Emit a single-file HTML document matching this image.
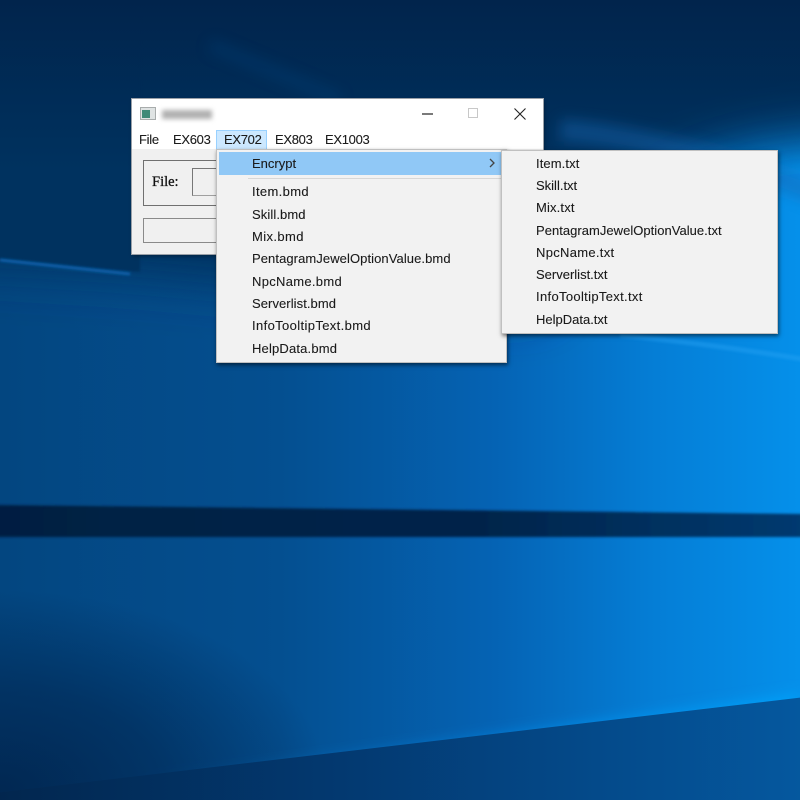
<!DOCTYPE html>
<html><head><meta charset="utf-8"><style>
html,body{margin:0;padding:0;width:800px;height:800px;overflow:hidden;background:#04305f}
#w{position:relative;width:800px;height:800px;overflow:hidden}
#bg{position:absolute;left:0;top:0;display:block}
.a{position:absolute;box-sizing:border-box}
.t{position:absolute;font:13px/18px "Liberation Sans",sans-serif;color:#1a1a1a;white-space:nowrap;-webkit-text-stroke:.1px #1a1a1a}
.m{letter-spacing:-.3px}
</style></head><body><div id="w">
<svg id="bg" width="800" height="800" viewBox="0 0 800 800">
<defs>
<linearGradient id="g0" x1="0" y1="0" x2="1" y2="0"><stop offset="0" stop-color="#034680"/><stop offset=".35" stop-color="#044f90"/><stop offset=".62" stop-color="#0563b4"/><stop offset=".82" stop-color="#057ed6"/><stop offset="1" stop-color="#0590ea"/></linearGradient>
<linearGradient id="top" x1="0" y1="0" x2="0" y2="1"><stop offset="0" stop-color="#01244c"/><stop offset="1" stop-color="#01244c" stop-opacity="0"/></linearGradient>
<linearGradient id="band" x1="0" y1="0" x2="1" y2="0"><stop offset="0" stop-color="#011f42"/><stop offset=".6" stop-color="#02244a"/><stop offset="1" stop-color="#043a70"/></linearGradient>
<linearGradient id="wedge" x1="0" y1="0" x2="1" y2="0"><stop offset="0" stop-color="#02264e"/><stop offset=".45" stop-color="#033a72"/><stop offset="1" stop-color="#05589f"/></linearGradient>
<linearGradient id="glow" x1="0" y1="0" x2="1" y2="0"><stop offset="0" stop-color="#0590ee" stop-opacity="0"/><stop offset=".55" stop-color="#0590ee" stop-opacity=".65"/><stop offset="1" stop-color="#05a2fa"/></linearGradient>
<radialGradient id="dark" gradientUnits="userSpaceOnUse" cx="0" cy="790" r="1" gradientTransform="translate(0 790) scale(330 200) translate(0 -790)"><stop offset="0" stop-color="#012650" stop-opacity=".95"/><stop offset=".5" stop-color="#012650" stop-opacity=".6"/><stop offset="1" stop-color="#012650" stop-opacity="0"/></radialGradient>
<filter id="b25" filterUnits="userSpaceOnUse" x="-300" y="-300" width="1400" height="1100"><feGaussianBlur stdDeviation="25"/></filter>
<filter id="b8" filterUnits="userSpaceOnUse" x="-300" y="-300" width="1400" height="1100"><feGaussianBlur stdDeviation="7"/></filter>
<filter id="b2" filterUnits="userSpaceOnUse" x="-300" y="-300" width="1400" height="1100"><feGaussianBlur stdDeviation="1.2"/></filter>
</defs>
<rect width="800" height="800" fill="url(#g0)"/>
<path d="M-100 -100H900V135C700 120 600 200 540 310L130 272L-100 258Z" fill="#02305e" filter="url(#b25)"/>
<path d="M-20 -20H140V272L-20 257Z" fill="#02305e" filter="url(#b2)"/>
<rect width="800" height="170" fill="url(#top)"/>
<path d="M210 45L340 100" stroke="#03457f" stroke-width="12" fill="none" opacity=".35" filter="url(#b8)"/>
<path d="M0 260L130 274" stroke="#0d60aa" stroke-width="3" fill="none" filter="url(#b2)"/>
<path d="M560 130Q680 140 820 195" stroke="#1468b4" stroke-width="22" fill="none" opacity=".45" filter="url(#b8)"/>
<path d="M620 335Q720 345 820 362" stroke="#2aa5f5" stroke-width="5" fill="none" opacity=".4" filter="url(#b2)"/>
<rect x="0" y="590" width="330" height="210" fill="url(#dark)"/>
<path d="M120 785L800 695L800 730L500 770Z" fill="url(#glow)" filter="url(#b8)"/>
<path d="M-5 793L805 697V800H-5Z" fill="url(#wedge)"/>
<path d="M-5 505L805 514V537L-5 537Z" fill="url(#band)" filter="url(#b2)"/>
</svg>

<div class="a" style="left:132px;top:99px;width:411px;height:155px;background:#fff;box-shadow:0 0 0 1px #9aa0a8,1px 2px 4px rgba(0,0,0,.4)"></div>
<div class="a" style="left:132px;top:149px;width:411px;height:105px;background:#f0f0f0"></div>
<div class="a" style="left:140px;top:107px;width:16px;height:13px;background:#dfe3e3;border:1px solid #a8acac"></div>
<div class="a" style="left:142px;top:110px;width:8px;height:8px;background:#3f8a78"></div>
<div class="a" style="left:162px;top:110px;width:50px;height:9px;background:#b0b0b0;filter:blur(2.5px)"></div>
<svg class="a" style="left:132px;top:99px" width="411" height="30" viewBox="0 0 411 30">
<path d="M290 15H301" stroke="#222" stroke-width="1.2"/>
<rect x="336.5" y="9.5" width="9" height="9" fill="none" stroke="#c8c8c8"/>
<path d="M382.5 9.5L393.5 20.5M393.5 9.5L382.5 20.5" stroke="#222" stroke-width="1.1"/>
</svg>
<div class="a" style="left:216px;top:130px;width:51px;height:20px;background:#cce8ff;border:1px solid #99d1ff"></div>
<div class="t m" style="left:139px;top:131px">File</div>
<div class="t m" style="left:173px;top:131px">EX603</div>
<div class="t m" style="left:224px;top:131px">EX702</div>
<div class="t m" style="left:275px;top:131px">EX803</div>
<div class="t m" style="left:325px;top:131px">EX1003</div>
<div class="a" style="left:143px;top:160px;width:120px;height:46px;border:1px solid #707070"></div>
<div class="a" style="left:192px;top:168px;width:60px;height:28px;border:1px solid #a0a0a0;border-left:1px solid #777;border-top:1px solid #777"></div>
<div class="t" style="left:152px;top:173px;font-family:'Liberation Serif',serif;font-size:14.5px;color:#111;-webkit-text-stroke:.3px #111">File:</div>
<div class="a" style="left:143px;top:218px;width:120px;height:25px;border:1px solid #8a8a8a"></div>

<div class="a" style="left:216px;top:149px;width:291px;height:214px;background:#f2f2f2;border:1px solid #c0c0c0;box-shadow:1px 2px 4px rgba(0,0,0,.55)"></div>
<div class="a" style="left:219px;top:152px;width:282px;height:23px;background:#90c8f6"></div>
<div class="a" style="left:248px;top:178px;width:256px;height:1px;background:#d7d7d7"></div>
<div class="t" style="left:252px;top:155px">Encrypt</div>
<svg class="a" style="left:488px;top:158px" width="8" height="10" viewBox="0 0 8 10"><path d="M2 1L6 5L2 9" fill="none" stroke="#444" stroke-width="1.3"/></svg>
<div class="t" style="left:252px;top:183px;letter-spacing:.35px">Item.bmd</div>
<div class="t" style="left:252px;top:206px;letter-spacing:.1px">Skill.bmd</div>
<div class="t" style="left:252px;top:228px;letter-spacing:.4px">Mix.bmd</div>
<div class="t" style="left:252px;top:250px;letter-spacing:.08px">PentagramJewelOptionValue.bmd</div>
<div class="t" style="left:252px;top:273px;letter-spacing:.3px">NpcName.bmd</div>
<div class="t" style="left:252px;top:295px;letter-spacing:.07px">Serverlist.bmd</div>
<div class="t" style="left:252px;top:317px;letter-spacing:.37px">InfoTooltipText.bmd</div>
<div class="t" style="left:252px;top:340px;letter-spacing:.17px">HelpData.bmd</div>

<div class="a" style="left:501px;top:150px;width:277px;height:184px;background:#f2f2f2;border:1px solid #c0c0c0;box-shadow:1px 2px 4px rgba(0,0,0,.55)"></div>
<div class="t" style="left:536px;top:155px;letter-spacing:.1px">Item.txt</div>
<div class="t" style="left:536px;top:177px">Skill.txt</div>
<div class="t" style="left:536px;top:199px;letter-spacing:.15px">Mix.txt</div>
<div class="t" style="left:536px;top:222px;letter-spacing:.03px">PentagramJewelOptionValue.txt</div>
<div class="t" style="left:536px;top:244px;letter-spacing:.3px">NpcName.txt</div>
<div class="t" style="left:536px;top:266px">Serverlist.txt</div>
<div class="t" style="left:536px;top:288px;letter-spacing:.33px">InfoTooltipText.txt</div>
<div class="t" style="left:536px;top:311px">HelpData.txt</div>
</div></body></html>
